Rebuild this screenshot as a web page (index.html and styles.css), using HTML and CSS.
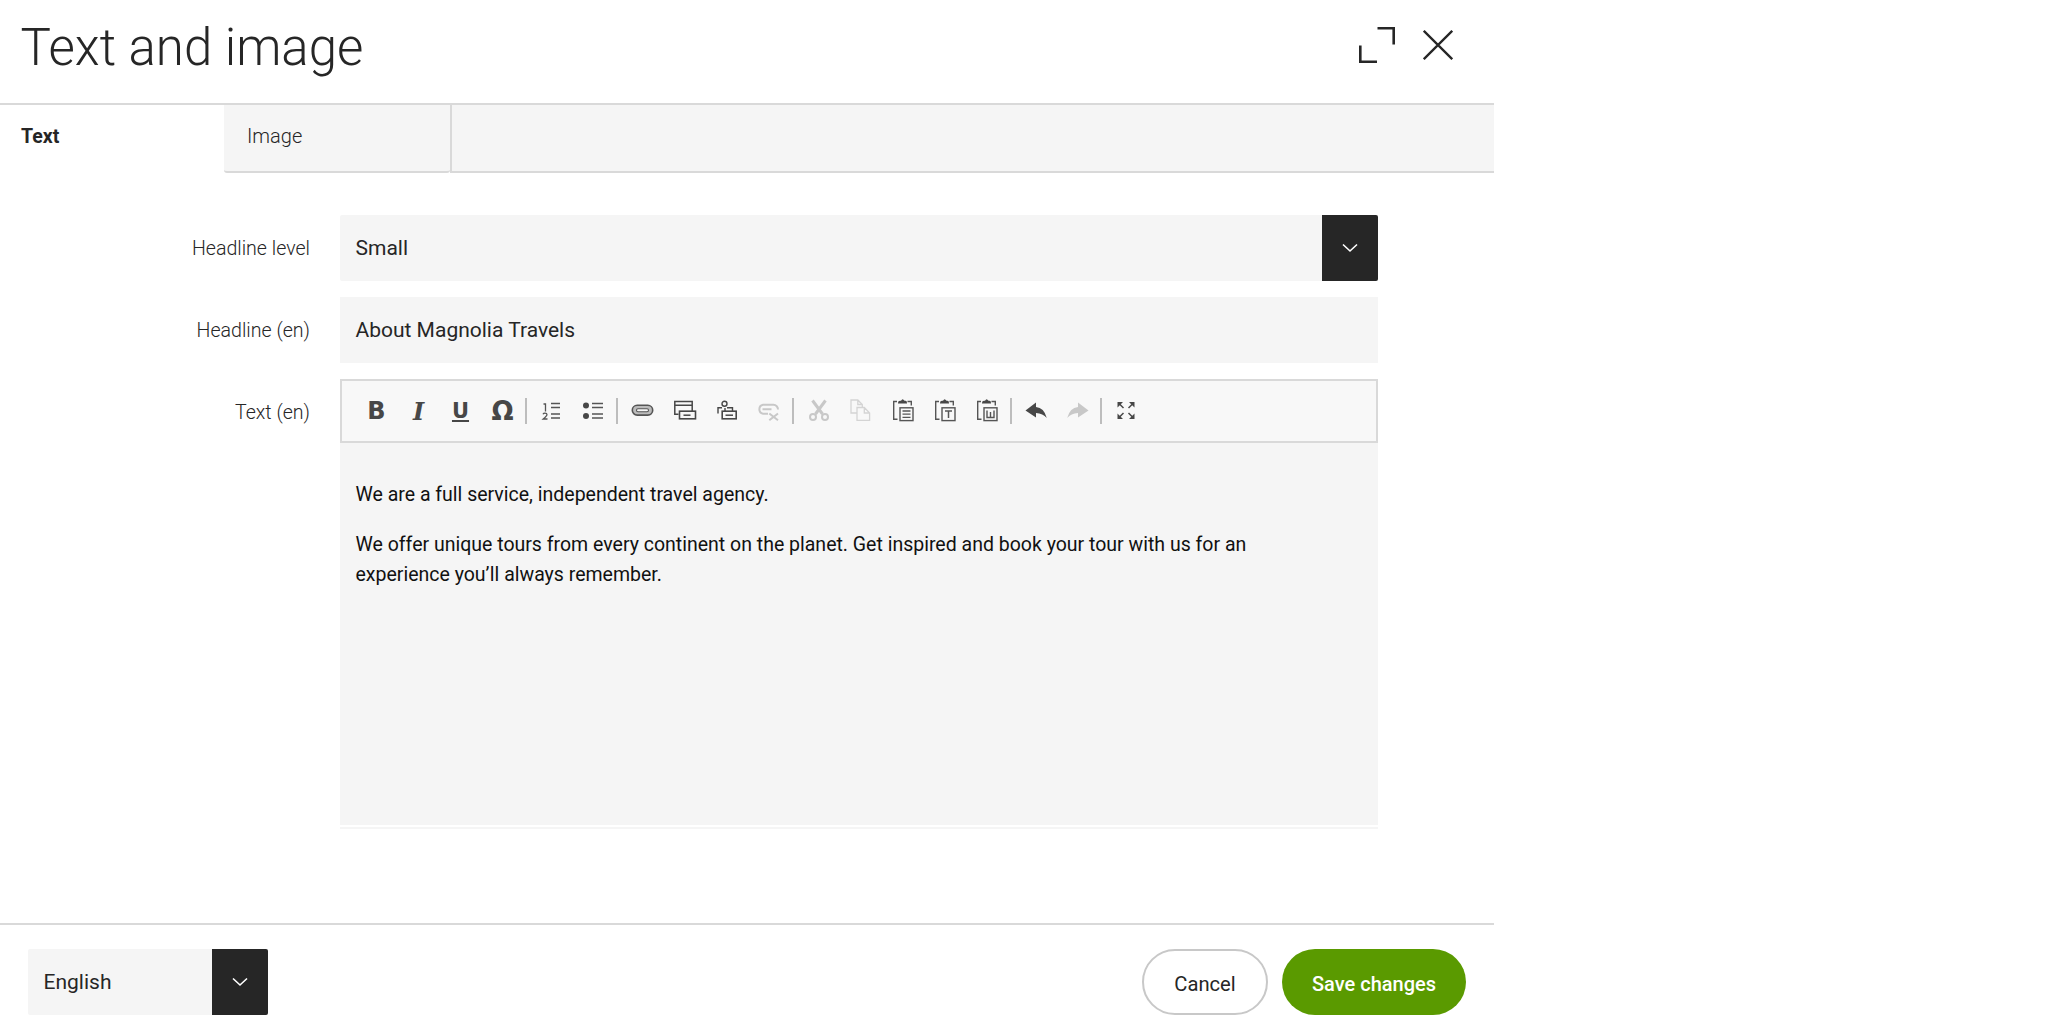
FILE: index.html
```html
<!DOCTYPE html>
<html lang="en">
<head>
<meta charset="utf-8">
<title>Text and image</title>
<link rel="stylesheet" href="styles.css">
</head>
<body>
<div class="dialog">
  <header class="head">
    <h1 class="title">Text and image</h1>
    <div class="head-actions">
      <svg class="head-icon" width="36" height="36" viewBox="0 0 36 36"><path d="M18.500 1.300H34.700V17.500M1.300 18.500V34.700H18" fill="none" stroke="#262626" stroke-width="2.600"/></svg>
      <svg class="head-icon" width="30" height="30" viewBox="0 0 30 30"><path d="M.8 .8L29.200 29.200M29.200 .8L.8 29.200" fill="none" stroke="#262626" stroke-width="2.300"/></svg>
    </div>
  </header>
  <nav class="tabs">
    <div class="tab tab-active">Text</div>
    <div class="tab tab-idle">Image</div>
    <div class="tab-rest"></div>
  </nav>
  <main class="form">
    <div class="row">
      <label class="label">Headline level</label>
      <div class="select select-wide">
        <span class="select-value">Small</span>
        <span class="select-btn"><svg width="16" height="10" viewBox="0 0 16 10"><path d="M1 1.500L8 8L15 1.500" fill="none" stroke="#fff" stroke-width="1.600"/></svg></span>
      </div>
    </div>
    <div class="row">
      <label class="label">Headline (en)</label>
      <div class="input">About Magnolia Travels</div>
    </div>
    <div class="row">
      <label class="label">Text (en)</label>
      <div class="editor">
        <div class="toolbar">
          <span class="tb tb-b">B</span>
          <span class="tb tb-i">I</span>
          <span class="tb tb-u">U</span>
          <span class="tb tb-o">Ω</span>
          <span class="sep"></span>
          <span class="tb"><svg width="24" height="24" viewBox="0 0 24 24"><g fill="none" stroke="#555"><path d="M4.500 5H6.500V12.500M4 15.200Q4.500 14.200 6 14.200Q8 14.200 8 15.700Q8 16.700 4.200 20H8.500" stroke-width="1.300"/><path d="M12 4.500H21M12 8.500H21M12 15H21M12 19H21" stroke-width="1.700"/></g></svg></span>
          <span class="tb"><svg width="24" height="24" viewBox="0 0 24 24"><circle cx="5" cy="6.500" r="3" fill="#474747"/><circle cx="5" cy="17" r="3" fill="#474747"/><path d="M11 4.500H22M11 8.500H22M11 15H22M11 19H22" fill="none" stroke="#555" stroke-width="1.700"/></svg></span>
          <span class="sep sep-a"></span>
          <span class="tb"><svg width="24" height="24" viewBox="0 0 24 24"><rect x="1.300" y="6.300" width="20.400" height="9.800" rx="4.900" fill="#bbb" stroke="#555" stroke-width="1.600"/><rect x="5.500" y="9.700" width="12" height="3" rx="1.500" fill="#f7f7f7" stroke="#555" stroke-width="1.100"/></svg></span>
          <span class="tb"><svg width="24" height="24" viewBox="0 0 24 24"><path d="M5.500 15.200H1.800V2.600H19.200V12M1.800 6.200H19.200" fill="none" stroke="#474747" stroke-width="1.500"/><rect x="6.500" y="12.200" width="16" height="7.600" fill="none" stroke="#474747" stroke-width="1.600"/><path d="M10.500 16.200H17.500" stroke="#474747" stroke-width="1.500"/></svg></span>
          <span class="tb"><svg width="24" height="24" viewBox="0 0 24 24"><circle cx="9.500" cy="4.800" r="2.500" fill="none" stroke="#474747" stroke-width="1.400"/><path d="M7 8.700H3V14.500M12 8.700H17.500V12M10 9V12" fill="none" stroke="#474747" stroke-width="1.400"/><rect x="7.200" y="12.200" width="14" height="7.600" fill="none" stroke="#474747" stroke-width="1.600"/><path d="M10.500 16.200H18" stroke="#474747" stroke-width="1.500"/></svg></span>
          <span class="tb"><svg width="24" height="24" viewBox="0 0 24 24"><path d="M11 14.800H6A4.600 4.600 0 0 1 6 5.800H16.500A4.600 4.600 0 0 1 21 10.500M5.500 10.200H14.500" fill="none" stroke="#c8c8c8" stroke-width="2"/><path d="M12.300 14.500L21 21.300M21 14.500L12.300 21.300" fill="none" stroke="#c8c8c8" stroke-width="2"/></svg></span>
          <span class="sep sep-b"></span>
          <span class="tb"><svg width="24" height="24" viewBox="0 0 24 24"><path d="M5.500 1.500L15.500 15M18.500 1.500L8.500 15" fill="none" stroke="#c8c8c8" stroke-width="3"/><circle cx="6" cy="18" r="3" fill="none" stroke="#c8c8c8" stroke-width="2"/><circle cx="18" cy="18" r="3" fill="none" stroke="#c8c8c8" stroke-width="2"/></svg></span>
          <span class="tb"><svg width="24" height="24" viewBox="0 0 24 24"><path d="M7.500 14H2V1H8.800L13.300 5.500V8M8.800 1V5.500H13.300M8 8.500H15.300L20.600 14V21.300H8ZM15.300 8.500V14H20.600" fill="none" stroke="#d4d4d4" stroke-width="1.300"/></svg></span>
          <span class="tb"><svg width="24" height="24" viewBox="0 0 24 24"><path d="M6 2.500H2.700V20.300H6.500M16.500 2.500H20.300V6.500" fill="none" stroke="#555" stroke-width="1.400"/><path d="M7 4Q7 1.800 9 1.800H10Q11 .2 11.500 .2Q12.500 .2 13.500 1.800H14.500Q16 1.800 16 4V4.500H7Z" fill="#474747"/><rect x="9" y="8.800" width="13" height="12.800" fill="none" stroke="#555" stroke-width="1.400"/><path d="M11.500 12H19.500M11.500 15.200H19.500M11.500 18.400H19.500" stroke="#555" stroke-width="1.300"/></svg></span>
          <span class="tb"><svg width="24" height="24" viewBox="0 0 24 24"><path d="M6 2.500H2.700V20.300H6.500M16.500 2.500H20.300V6.500" fill="none" stroke="#555" stroke-width="1.400"/><path d="M7 4Q7 1.800 9 1.800H10Q11 .2 11.500 .2Q12.500 .2 13.500 1.800H14.500Q16 1.800 16 4V4.500H7Z" fill="#474747"/><rect x="9" y="8.800" width="13" height="12.800" fill="none" stroke="#555" stroke-width="1.400"/><path d="M12 12H19M15.500 12V19" stroke="#555" stroke-width="1.500"/></svg></span>
          <span class="tb"><svg width="24" height="24" viewBox="0 0 24 24"><path d="M6 2.500H2.700V20.300H6.500M16.500 2.500H20.300V6.500" fill="none" stroke="#555" stroke-width="1.400"/><path d="M7 4Q7 1.800 9 1.800H10Q11 .2 11.500 .2Q12.500 .2 13.500 1.800H14.500Q16 1.800 16 4V4.500H7Z" fill="#474747"/><rect x="9" y="8.800" width="13" height="12.800" fill="none" stroke="#555" stroke-width="1.400"/><path d="M12 11.500V18.500H19V11.500M15.500 13V18.500" fill="none" stroke="#555" stroke-width="1.400"/></svg></span>
          <span class="sep sep-c"></span>
          <span class="tb"><svg width="24" height="24" viewBox="0 0 24 24"><path d="M1.500 11.500L12 3.500V8Q20 8.500 22.800 19Q19 14.500 12 14V18.500Z" fill="#474747"/></svg></span>
          <span class="tb"><svg width="24" height="24" viewBox="0 0 24 24"><path d="M22.500 11.500L12 3.500V8Q4 8.500 1.200 19Q5 14.500 12 14V18.500Z" fill="#c8c8c8"/></svg></span>
          <span class="sep"></span>
          <span class="tb"><svg width="24" height="24" viewBox="0 0 24 24"><path d="M3.500 3H9L3.500 8.500ZM20.500 3V8.500L15 3ZM3.500 20V14.500L9 20ZM20.500 20H15L20.500 14.500Z" fill="#474747"/><path d="M5.500 5L9.500 9M18.500 5L14.500 9M5.500 18L9.500 14M18.500 18L14.500 14" stroke="#474747" stroke-width="1.500" fill="none"/></svg></span>
        </div>
        <div class="content">
          <p>We are a full service, independent travel agency.</p>
          <p>We offer unique tours from every continent on the planet. Get inspired and book your tour with us for an experience you’ll always remember.</p>
        </div>
        <div class="resize"></div>
      </div>
    </div>
  </main>
  <footer class="foot">
    <div class="select select-lang">
      <span class="select-value">English</span>
      <span class="select-btn"><svg width="16" height="10" viewBox="0 0 16 10"><path d="M1 1.500L8 8L15 1.500" fill="none" stroke="#fff" stroke-width="1.600"/></svg></span>
    </div>
    <div class="foot-actions">
      <button class="btn btn-cancel">Cancel</button>
      <button class="btn btn-save">Save changes</button>
    </div>
  </footer>
</div>
</body>
</html>
```
FILE: styles.css
```css
* { box-sizing: border-box; }
html, body { margin: 0; padding: 0; background: #fff; }
body { font-family: Roboto, sans-serif; color: #262626; }
.dialog { width: 1494px; height: 1030px; display: flex; flex-direction: column; }
.head { height: 103px; flex: none; display: flex; align-items: center; justify-content: space-between; padding: 0 41px 0 20.500px; }
.title { margin: 0 0 8px; font-size: 51px; font-weight: 300; line-height: 70px; color: #262626; }
.head-actions { display: flex; align-items: center; gap: 28px; margin-bottom: 14px; }
.head-icon { display: block; }
.tabs { height: 70px; flex: none; display: flex; border-top: 2px solid #d9d9d9; font-size: 20px; }
.tab { height: 68px; display: flex; align-items: center; padding-bottom: 5px; }
.tab-active { width: 224px; padding-left: 21px; font-weight: 700; font-size: 19.500px; }
.tab-idle { width: 226px; padding-left: 23px; font-weight: 300; background: #f5f5f5; border-bottom: 2px solid #d9d9d9; border-bottom-left-radius: 3px; border-bottom-right-radius: 3px; }
.tab-rest { flex: 1; background: #f5f5f5; border-left: 2px solid #d9d9d9; border-bottom: 2px solid #d9d9d9; }
.form { flex: 1; padding-top: 42px; display: flex; flex-direction: column; gap: 16px; }
.row { display: flex; gap: 30px; }
.label { width: 310px; height: 66px; flex: none; text-align: right; font-size: 19.600px; font-weight: 300; line-height: 68px; color: #262626; }
.select { display: flex; background: #f5f5f5; height: 66px; border-radius: 2px; overflow: hidden; }
.select-wide { width: 1038px; }
.select-lang { width: 240px; }
.select-value { flex: 1; padding-left: 15.500px; font-size: 21px; line-height: 66px; }
.select-btn { width: 56px; flex: none; background: #262626; display: flex; align-items: center; justify-content: center; }
.input { width: 1038px; height: 66px; background: #f5f5f5; padding-left: 15.500px; font-size: 21px; line-height: 66px; }
.editor { width: 1038px; display: flex; flex-direction: column; }
.toolbar { height: 64px; display: flex; align-items: center; background: #f8f8f8; border: 2px solid #d9d9d9; padding-left: 13.500px; }
.tb { width: 42px; height: 30px; flex: none; display: flex; align-items: center; justify-content: center; color: #474747; }
.tb-b { font: 700 24px "DejaVu Sans", sans-serif; }
.tb-i { font: italic 700 24px "DejaVu Serif", serif; }
.tb-u { font: 700 21px "DejaVu Sans", sans-serif; text-decoration: underline; }
.tb-o { font: 700 26px "DejaVu Sans", sans-serif; }
.sep { width: 2px; height: 26px; flex: none; background: #bdbdbd; margin: 0 3px 0 1px; }
.sep-a { margin: 0 4px 0 2px; }
.sep-b { margin: 0 4px 0 2.500px; }
.sep-c { margin: 0 3px 0 2px; }
.content { height: 382px; background: #f5f5f5; padding: 37px 60px 0 15.500px; font-size: 19.500px; line-height: 30px; color: #111; }
.content p { margin: 0 0 20px; }
.resize { height: 4px; border-top: 2px solid #fff; background: #f5f5f5; }
.foot { height: 107px; flex: none; display: flex; justify-content: space-between; align-items: flex-start; border-top: 2px solid #d9d9d9; padding: 24px 28px 0; }
.foot-actions { display: flex; gap: 14px; }
.btn { height: 66px; border-radius: 33px; font-family: Roboto, sans-serif; font-size: 20.200px; padding: 3px 0 0; }
.btn-cancel { width: 126px; background: #fff; border: 2px solid #c8c8c8; color: #262626; }
.btn-save { width: 184px; background: #5a9a00; border: 0; color: #fff; font-size: 20px; font-weight: 500; }
```
